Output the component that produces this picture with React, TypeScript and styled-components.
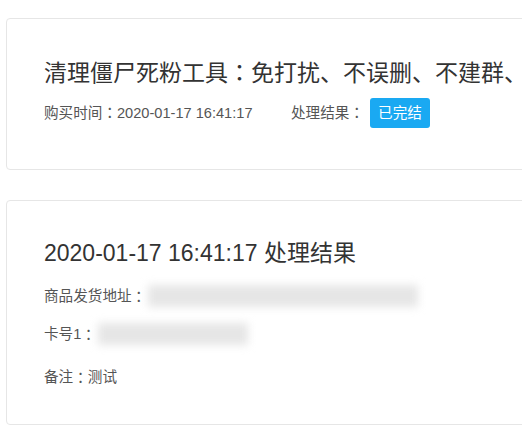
import React from "react";
import styled, { createGlobalStyle } from "styled-components";

const Global = createGlobalStyle`
  html, body {
    margin: 0;
    padding: 0;
    background: #ffffff;
    overflow: hidden;
  }
  body {
    font-family: "Liberation Sans", Arial, "Noto Sans CJK SC", sans-serif;
    color: #333;
  }
`;

const Page = styled.div`
  width: 760px;
  padding: 18px 0 0 6px;
  display: flex;
  flex-direction: column;
  gap: 30px;
`;

const Card = styled.section<{ $pt: number; $pb: number }>`
  border: 1px solid #e6e6e6;
  border-radius: 4px;
  background: #fff;
  padding: ${(p) => p.$pt}px 20px ${(p) => p.$pb}px 37px;
  display: flex;
  flex-direction: column;
`;

const Title = styled.h2`
  margin: 0;
  font-size: 23px;
  line-height: 30px;
  font-weight: normal;
  color: #333;
  white-space: nowrap;
`;

const Colon = styled.span`
  font-family: "Noto Sans CJK TC", sans-serif;
  line-height: 0;
`;

const Meta = styled.div`
  margin-top: 10px;
  display: flex;
  align-items: center;
  height: 30px;
  font-size: 14.6px;
  line-height: 20px;
  color: #555;
`;

const MetaItem = styled.span<{ $w?: number }>`
  display: inline-block;
  ${(p) => (p.$w ? `width: ${p.$w}px;` : "")}
  white-space: nowrap;
`;

const Badge = styled.span`
  display: inline-flex;
  align-items: center;
  justify-content: center;
  width: 60px;
  height: 30px;
  margin-left: 6px;
  border-radius: 3px;
  background: #1aa9f2;
  color: #fff;
  font-size: 14.6px;
`;

const Row = styled.div<{ $mt: number }>`
  margin-top: ${(p) => p.$mt}px;
  display: flex;
  align-items: center;
  height: 20px;
  font-size: 14.6px;
  line-height: 20px;
  color: #555;
  white-space: nowrap;
`;

const Blur = styled.span<{ $w: number; $h: number }>`
  display: inline-block;
  width: ${(p) => p.$w}px;
  height: ${(p) => p.$h}px;
  background: #e6e6e6;
  filter: blur(4px);
  margin-left: 2px;
`;

export default function App() {
  return (
    <>
      <Global />
      <Page>
        <Card $pt={39} $pb={41}>
          <Title>
            清理僵尸死粉工具<Colon>：</Colon>免打扰、不误删、不建群、不发消息，一键检测
          </Title>
          <Meta>
            <MetaItem $w={247}>
              购买时间<Colon>：</Colon>2020-01-17 16:41:17
            </MetaItem>
            <MetaItem>
              处理结果<Colon>：</Colon>
            </MetaItem>
            <Badge>已完结</Badge>
          </Meta>
        </Card>
        <Card $pt={37} $pb={37}>
          <Title>2020-01-17 16:41:17 处理结果</Title>
          <Row $mt={18}>
            商品发货地址<Colon>：</Colon>
            <Blur $w={270} $h={22} />
          </Row>
          <Row $mt={18}>
            卡号1<Colon>：</Colon>
            <Blur $w={150} $h={22} />
          </Row>
          <Row $mt={23}>
            备注<Colon>：</Colon>测试
          </Row>
        </Card>
      </Page>
    </>
  );
}
